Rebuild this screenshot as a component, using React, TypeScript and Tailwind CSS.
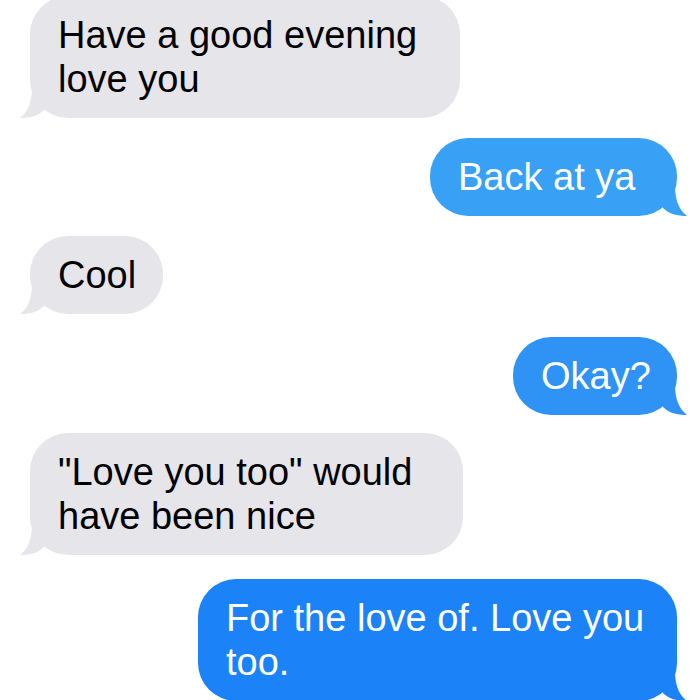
import React from 'react';

type Msg = { text: string; from: 'me' | 'them'; width: string; color: string; bg: string; nudge?: string };

const messages: Msg[] = [
  { text: 'Have a good evening love you', from: 'them', width: 'w-[430px]', color: '#e5e5ea', bg: 'bg-[#e5e5ea]' },
  { text: 'Back at ya', from: 'me', width: 'w-[247px]', color: '#38a1f5', bg: 'bg-[#38a1f5]' },
  { text: 'Cool', from: 'them', width: 'w-[133px]', color: '#e5e5ea', bg: 'bg-[#e5e5ea]' },
  { text: 'Okay?', from: 'me', width: 'w-[164px]', color: '#2e93f4', bg: 'bg-[#2e93f4]', nudge: 'mt-[3px]' },
  { text: '"Love you too" would have been nice', from: 'them', width: 'w-[433px]', color: '#e5e5ea', bg: 'bg-[#e5e5ea]', nudge: '-mt-[2px]' },
  { text: 'For the love of. Love you too.', from: 'me', width: 'w-[479px]', color: '#1c82f7', bg: 'bg-[#1c82f7]', nudge: 'mt-[4px]' },
];

const Tail: React.FC<{ side: 'left' | 'right'; color: string }> = ({ side, color }) => (
  <svg
    width="26"
    height="30"
    viewBox="0 0 26 30"
    className={
      side === 'left'
        ? 'absolute bottom-0 left-[-10px]'
        : 'absolute bottom-0 right-[-10px] -scale-x-100'
    }
  >
    <path d="M12 0 C12 14 8 24 0 30 C10 30 18 28 24 22 L26 0 Z" fill={color} />
  </svg>
);

const Bubble: React.FC<{ msg: Msg }> = ({ msg }) => {
  const mine = msg.from === 'me';
  return (
    <div
      className={`relative ${mine ? 'self-end mr-[23px]' : 'self-start ml-[30px]'} ${msg.width} ${msg.nudge ?? ''}`}
    >
      <div
        className={`relative z-10 rounded-[38px] px-[28px] py-[17px] text-[38px] leading-[44px] ${msg.bg} ${
          mine ? 'text-white' : 'text-black'
        }`}
      >
        {msg.text}
      </div>
      <Tail side={mine ? 'right' : 'left'} color={msg.color} />
    </div>
  );
};

export default function App() {
  return (
    <div
      className="w-[700px] h-[700px] overflow-hidden bg-white"
      style={{ fontFamily: '"Liberation Sans", Arial, sans-serif' }}
    >
      <div className="-mt-[4px] flex flex-col gap-[20px]">
        {messages.map((m, i) => (
          <Bubble key={i} msg={m} />
        ))}
      </div>
    </div>
  );
}
